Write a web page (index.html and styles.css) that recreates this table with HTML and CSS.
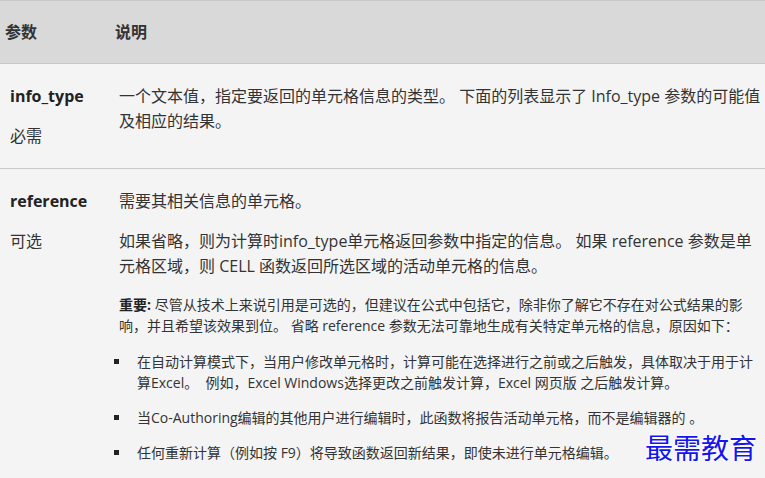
FILE: index.html
```html
<!DOCTYPE html>
<html lang="zh-CN">
<head>
    <meta charset="UTF-8">
    <meta name="viewport" content="width=device-width, initial-scale=1.0">
    <title>CELL 函数参数</title>
    <link rel="stylesheet" href="styles.css">
</head>
<body>

    <table class="param-table">
        <thead>
            <tr>
                <th class="col-name">参数</th>
                <th>说明</th>
            </tr>
        </thead>
        <tbody>
            <!-- info_type -->
            <tr>
                <td class="col-name">
                    <p><strong>info_type</strong></p>
                    <p>必需</p>
                </td>
                <td>
                    <p>一个文本值，指定要返回的单元格信息的类型。 下面的列表显示了 Info_type 参数的可能值及相应的结果。</p>
                </td>
            </tr>

            <!-- reference -->
            <tr>
                <td class="col-name">
                    <p><strong>reference</strong></p>
                    <p>可选</p>
                </td>
                <td>
                    <p>需要其相关信息的单元格。</p>
                    <p>如果省略，则为计算时info_type单元格返回参数中指定的信息。 如果 reference 参数是单元格区域，则 CELL 函数返回所选区域的活动单元格的信息。</p>
                    <p class="note"><strong>重要:</strong> 尽管从技术上来说引用是可选的，但建议在公式中包括它，除非你了解它不存在对公式结果的影响，并且希望该效果到位。 省略 reference 参数无法可靠地生成有关特定单元格的信息，原因如下：</p>
                    <ul class="reasons">
                        <li>在自动计算模式下，当用户修改单元格时，计算可能在选择进行之前或之后触发，具体取决于用于计算Excel。 &nbsp;例如，Excel Windows选择更改之前触发计算，Excel 网页版 之后触发计算。</li>
                        <li>当Co-Authoring编辑的其他用户进行编辑时，此函数将报告活动单元格，而不是编辑器的 。</li>
                        <li>任何重新计算（例如按 F9）将导致函数返回新结果，即使未进行单元格编辑。</li>
                    </ul>
                </td>
            </tr>
        </tbody>
    </table>

    <div class="watermark">最需教育</div>

</body>
</html>
```

FILE: styles.css
```css
body {
    font-family: 'Open Sans', 'Noto Sans CJK SC', sans-serif;
    background-color: #f4f4f4;
    color: #333;
    margin: 0;
    padding: 0;
}

.param-table {
    width: 100%;
    border-collapse: collapse;
    font-size: 16px;
    line-height: 25px;
}

.param-table th {
    background-color: #d9d9d9;
    text-align: left;
    font-weight: bold;
    padding: 19px 5px 18px 5px;
    border-top: 1px solid #c8c8c8;
    border-bottom: 1px solid #c6c6c6;
}

.param-table td {
    vertical-align: top;
    padding: 20px 0 19px 9px;
    border-bottom: 1px solid #c8c8c8;
}

.param-table .col-name {
    width: 100px;
}

.param-table td.col-name {
    padding-left: 10px;
    padding-right: 0;
}

.param-table p {
    margin: 0 0 15px 0;
}

.param-table p:last-child {
    margin-bottom: 0;
}

.param-table strong {
    color: #222;
}

.param-table .note {
    font-size: 14px;
    line-height: 21px;
    margin-right: 10px;
}

.reasons {
    list-style: none;
    margin: 0 10px 0 0;
    padding: 0 0 0 18px;
    font-size: 14px;
    line-height: 21px;
}

.reasons li {
    position: relative;
    margin-bottom: 14px;
}

.reasons li::before {
    content: "";
    position: absolute;
    left: -23px;
    top: 8px;
    width: 5px;
    height: 5px;
    background-color: #222;
}

.watermark {
    position: absolute;
    right: 8px;
    bottom: 17px;
    font-family: 'Noto Sans CJK SC', sans-serif;
    font-size: 28px;
    line-height: 28px;
    color: #1414ee;
    text-shadow: 0 0 3px #fff, 0 0 3px #fff, 0 0 2px #fff;
}
```
